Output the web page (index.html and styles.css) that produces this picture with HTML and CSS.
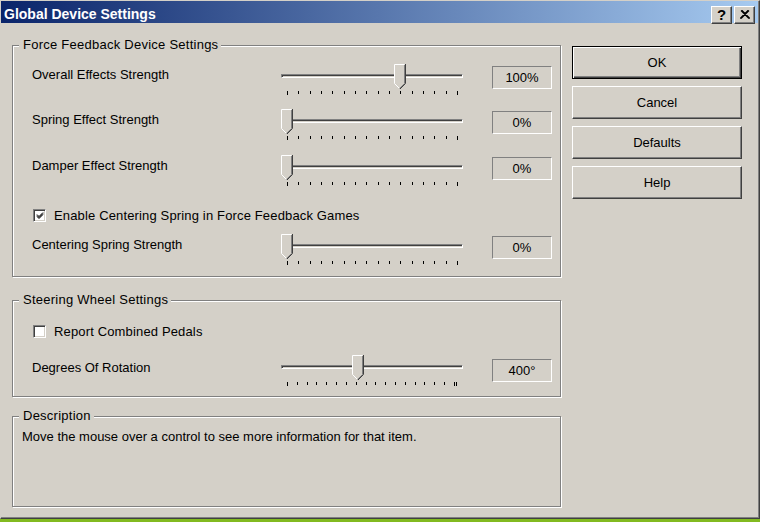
FILE: index.html
```html
<!DOCTYPE html>
<html>
<head>
<meta charset="utf-8">
<link rel="stylesheet" href="styles.css">
</head>
<body>
<div class="window">
  <div class="titlebar">
    <span class="title">Global Device Settings</span>
    <div class="tb-buttons">
      <span class="tb-btn">?</span>
      <span class="tb-btn"><svg width="10" height="9" viewBox="0 0 10 9"><path d="M1 0.5 L9 8.5 M9 0.5 L1 8.5 M2 0.5 L10 8.5 M8 0.5 L0 8.5" stroke="#000" stroke-width="1.2" fill="none"/></svg></span>
    </div>
  </div>
  <div class="client">
    <div class="left">
      <div class="group g1">
        <div class="legend">Force Feedback Device Settings</div>
        <div class="row r1">
          <span class="label">Overall Effects Strength</span>
          <div class="slider">
            <div class="track"></div>
            <svg class="thumb" style="left:113px" width="12" height="25" viewBox="0 0 12 25"><polygon points="0,0 12,0 12,19 6,25 0,19" fill="#D4D0C8"/><path d="M0.5 19.5V0.5H10.5M0.5 19.5L5.5 24.5" stroke="#fff" fill="none"/><path d="M10.5 1V19.5L5.5 24.5" stroke="#808080" fill="none"/><path d="M11.5 0V19.5L6 25" stroke="#404040" fill="none"/></svg>
            <div class="ticks"><i class="tk end"></i><i class="tk"></i><i class="tk"></i><i class="tk"></i><i class="tk"></i><i class="tk"></i><i class="tk"></i><i class="tk"></i><i class="tk"></i><i class="tk"></i><i class="tk"></i><i class="tk"></i><i class="tk"></i><i class="tk"></i><i class="tk"></i><i class="tk end"></i></div>
          </div>
          <div class="value">100%</div>
        </div>
        <div class="row r2">
          <span class="label">Spring Effect Strength</span>
          <div class="slider">
            <div class="track"></div>
            <svg class="thumb" style="left:0px" width="12" height="25" viewBox="0 0 12 25"><polygon points="0,0 12,0 12,19 6,25 0,19" fill="#D4D0C8"/><path d="M0.5 19.5V0.5H10.5M0.5 19.5L5.5 24.5" stroke="#fff" fill="none"/><path d="M10.5 1V19.5L5.5 24.5" stroke="#808080" fill="none"/><path d="M11.5 0V19.5L6 25" stroke="#404040" fill="none"/></svg>
            <div class="ticks"><i class="tk end"></i><i class="tk"></i><i class="tk"></i><i class="tk"></i><i class="tk"></i><i class="tk"></i><i class="tk"></i><i class="tk"></i><i class="tk"></i><i class="tk"></i><i class="tk"></i><i class="tk"></i><i class="tk"></i><i class="tk"></i><i class="tk"></i><i class="tk end"></i></div>
          </div>
          <div class="value">0%</div>
        </div>
        <div class="row r3">
          <span class="label">Damper Effect Strength</span>
          <div class="slider">
            <div class="track"></div>
            <svg class="thumb" style="left:0px" width="12" height="25" viewBox="0 0 12 25"><polygon points="0,0 12,0 12,19 6,25 0,19" fill="#D4D0C8"/><path d="M0.5 19.5V0.5H10.5M0.5 19.5L5.5 24.5" stroke="#fff" fill="none"/><path d="M10.5 1V19.5L5.5 24.5" stroke="#808080" fill="none"/><path d="M11.5 0V19.5L6 25" stroke="#404040" fill="none"/></svg>
            <div class="ticks"><i class="tk end"></i><i class="tk"></i><i class="tk"></i><i class="tk"></i><i class="tk"></i><i class="tk"></i><i class="tk"></i><i class="tk"></i><i class="tk"></i><i class="tk"></i><i class="tk"></i><i class="tk"></i><i class="tk"></i><i class="tk"></i><i class="tk"></i><i class="tk end"></i></div>
          </div>
          <div class="value">0%</div>
        </div>
        <div class="check-row c1">
          <span class="checkbox"><svg width="9" height="9" viewBox="0 0 9 9"><path d="M1 3.5l2 2l4-4M1 4.5l2 2l4-4M1 5.5l2 2l4-4" stroke="#000" fill="none"/></svg></span>
          <span class="cb-text">Enable Centering Spring in Force Feedback Games</span>
        </div>
        <div class="row r4">
          <span class="label">Centering Spring Strength</span>
          <div class="slider">
            <div class="track"></div>
            <svg class="thumb" style="left:0px" width="12" height="25" viewBox="0 0 12 25"><polygon points="0,0 12,0 12,19 6,25 0,19" fill="#D4D0C8"/><path d="M0.5 19.5V0.5H10.5M0.5 19.5L5.5 24.5" stroke="#fff" fill="none"/><path d="M10.5 1V19.5L5.5 24.5" stroke="#808080" fill="none"/><path d="M11.5 0V19.5L6 25" stroke="#404040" fill="none"/></svg>
            <div class="ticks"><i class="tk end"></i><i class="tk"></i><i class="tk"></i><i class="tk"></i><i class="tk"></i><i class="tk"></i><i class="tk"></i><i class="tk"></i><i class="tk"></i><i class="tk"></i><i class="tk"></i><i class="tk"></i><i class="tk"></i><i class="tk"></i><i class="tk"></i><i class="tk end"></i></div>
          </div>
          <div class="value">0%</div>
        </div>
      </div>

      <div class="group g2">
        <div class="legend">Steering Wheel Settings</div>
        <div class="check-row c2">
          <span class="checkbox"></span>
          <span class="cb-text">Report Combined Pedals</span>
        </div>
        <div class="row r5">
          <span class="label l5">Degrees Of Rotation</span>
          <div class="slider">
            <div class="track"></div>
            <svg class="thumb" style="left:71px" width="12" height="25" viewBox="0 0 12 25"><polygon points="0,0 12,0 12,19 6,25 0,19" fill="#D4D0C8"/><path d="M0.5 19.5V0.5H10.5M0.5 19.5L5.5 24.5" stroke="#fff" fill="none"/><path d="M10.5 1V19.5L5.5 24.5" stroke="#808080" fill="none"/><path d="M11.5 0V19.5L6 25" stroke="#404040" fill="none"/></svg>
            <div class="ticks deg"><div class="tickrow"><i class="tk end"></i><i class="tk"></i><i class="tk"></i><i class="tk"></i><i class="tk"></i><i class="tk"></i><i class="tk"></i><i class="tk"></i><i class="tk"></i><i class="tk"></i><i class="tk"></i><i class="tk"></i><i class="tk"></i><i class="tk"></i><i class="tk"></i><i class="tk"></i><i class="tk"></i><i class="tk end"></i></div><i class="tk end extra"></i></div>
          </div>
          <div class="value v5">400°</div>
        </div>
      </div>

      <div class="group g3">
        <div class="legend">Description</div>
        <p class="desc">Move the mouse over a control to see more information for that item.</p>
      </div>
    </div>

    <div class="right">
      <div class="btn default">OK</div>
      <div class="btn">Cancel</div>
      <div class="btn">Defaults</div>
      <div class="btn">Help</div>
    </div>
  </div>
</div>
</body>
</html>
```

FILE: styles.css
```css
html, body {
  margin: 0;
  padding: 0;
}
body {
  background: #82BA20;
  font-family: "Liberation Sans", Arial, sans-serif;
  font-size: 13px;
  color: #000;
  width: 760px;
  height: 522px;
  overflow: hidden;
}
.window {
  width: 760px;
  height: 519px;
  box-sizing: border-box;
  background: #D4D0C8;
  border-top: 1px solid #D4D0C8;
  border-left: 1px solid #D4D0C8;
  border-right: 1px solid #404040;
  border-bottom: 1px solid #404040;
  box-shadow: inset -1px -1px #808080;
  display: flex;
  flex-direction: column;
}
.titlebar {
  height: 22px;
  margin-right: 1px;
  background: linear-gradient(to right, #0A246A, #A6CAF0);
  display: flex;
  align-items: center;
}
.title {
  color: #fff;
  font-weight: bold;
  font-size: 14px;
  padding-left: 3px;
  padding-top: 3px;
  line-height: 16px;
}
.tb-buttons {
  margin-left: auto;
  margin-right: 3px;
  margin-top: 5px;
  display: flex;
  gap: 2px;
}
.tb-btn {
  width: 21px;
  height: 18px;
  box-sizing: border-box;
  background: #D4D0C8;
  border: 1px solid;
  border-color: #fff #404040 #404040 #fff;
  box-shadow: inset -1px -1px #808080;
  display: flex;
  align-items: center;
  justify-content: center;
  font-weight: bold;
  font-size: 15px;
  line-height: 16px;
}
.client {
  display: flex;
  padding-left: 11px;
}
.left {
  width: 549px;
  margin-right: 11px;
  padding-top: 22px;
}
.group {
  box-sizing: border-box;
  border: 1px solid #808080;
  box-shadow: inset 1px 1px #fff, 1px 1px #fff;
  padding: 0 8px 0 19px;
}
.g1 { height: 232px; }
.g2 { height: 97px; margin-top: 23px; }
.g3 { height: 91px; margin-top: 19px; padding-left: 9px; }
.legend {
  width: fit-content;
  margin: -9px 0 0 -13px;
  padding: 0 3px 0 4px;
  line-height: 16px;
  letter-spacing: 0.25px;
  background: #D4D0C8;
}
.g3 .legend { margin-left: -3px; }
.cb-text { letter-spacing: 0.15px; }
.row {
  display: flex;
  align-items: flex-start;
  height: 31px;
}
.label {
  width: 249px;
  margin-top: 3px;
  line-height: 16px;
}
.label.l5 { margin-top: 5px; }
.r1 { margin-top: 11px; }
.r2 { margin-top: 14px; }
.r3 { margin-top: 15px; }
.r4 { margin-top: 11px; }
.r5 { margin-top: 16px; }
.slider {
  position: relative;
  width: 182px;
  height: 31px;
}
.track {
  position: absolute;
  left: 0;
  right: 0;
  top: 10px;
  height: 4px;
  box-sizing: border-box;
  border-top: 1px solid #808080;
  border-left: 1px solid #808080;
  border-bottom: 1px solid #fff;
  border-right: 1px solid #fff;
  box-shadow: inset 1px 1px #404040;
}
.thumb {
  position: absolute;
  top: 0;
  display: block;
}
.ticks {
  position: absolute;
  left: 6px;
  top: 27px;
  width: 171px;
  display: flex;
  justify-content: space-between;
  align-items: flex-start;
}
.ticks.deg {
  width: 170px;
  justify-content: flex-start;
}
.tickrow {
  width: 168px;
  display: flex;
  justify-content: space-between;
  align-items: flex-start;
}
.tk {
  display: block;
  width: 1px;
  height: 3px;
  background: #000;
}
.tk.end { height: 4px; }
.tk.extra { margin-left: 1px; }
.value {
  box-sizing: border-box;
  width: 60px;
  height: 23px;
  margin-left: 29px;
  margin-top: 2px;
  border: 1px solid;
  border-color: #808080 #fff #fff #808080;
  text-align: center;
  line-height: 21px;
}
.value.v5 { margin-top: 4px; }
.check-row {
  display: flex;
  align-items: center;
  height: 16px;
  gap: 8px;
}
.c1 { margin-top: 21px; }
.c2 { margin-top: 15px; }
.checkbox {
  box-sizing: border-box;
  width: 13px;
  height: 13px;
  margin-left: 1px;
  background: #fff;
  border: 1px solid;
  border-color: #808080 #fff #fff #808080;
  box-shadow: inset 1px 1px #404040, inset -1px -1px #D4D0C8;
  display: flex;
  align-items: center;
  justify-content: center;
}
.checkbox svg { display: block; margin: 1px 0 0 1px; }
.desc {
  margin: 5px 0 0 0;
  line-height: 16px;
}
.right {
  padding-top: 23px;
  display: flex;
  flex-direction: column;
  gap: 7px;
}
.btn {
  box-sizing: border-box;
  width: 170px;
  height: 33px;
  border: 1px solid;
  border-color: #fff #404040 #404040 #fff;
  box-shadow: inset -1px -1px #808080;
  display: flex;
  align-items: center;
  justify-content: center;
}
.btn.default {
  border: 1px solid #000;
  box-shadow: inset 1px 1px #fff, inset -1px -1px #404040, inset -2px -2px #808080;
}
```
